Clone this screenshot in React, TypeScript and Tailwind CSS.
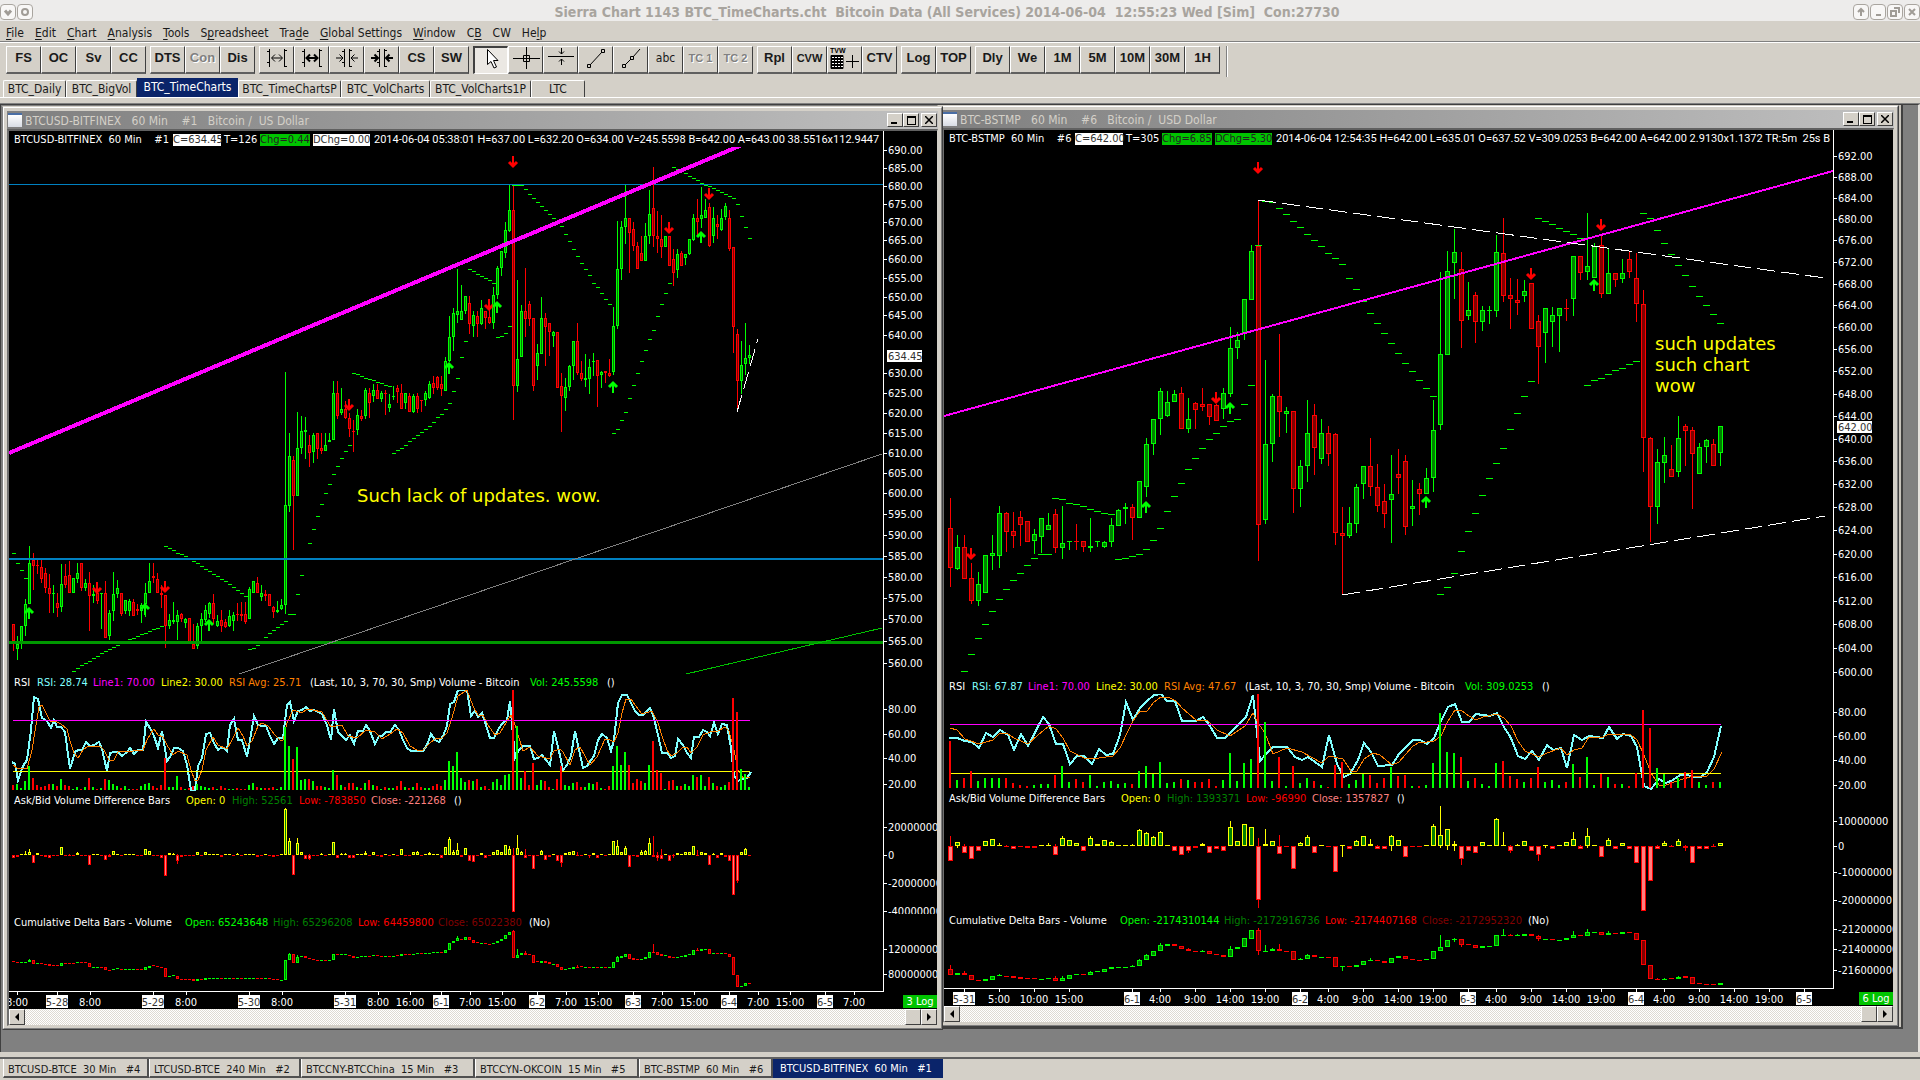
import type { ReactNode } from "react";

const GREEN = "#00ff00";
const RED = "#ff0000";
const UI = "font-['DejaVu_Sans_Condensed','DejaVu_Sans',sans-serif]";

type Scale = (v: number) => number;
type Bar = { color: string; fill: string; high: number; top: number; bottom: number; low: number };
type Series = { x0: number; step: number; half: number };

// Price panes are recorded at 2.8 units per pixel, study panes at 3.
const priceY: Scale = (v) => Math.round(130 + v / 2.8);
const studyY: Scale = (v) => Math.round(670 + (v - 1) / 3);

const words = (s: string) => s.trim().split(/\s+/);

// "color high top bottom low" for every bar
function parsePrice(s: string): Bar[] {
  return s.split(/[;\n]/).filter((r) => r.trim()).map((row) => {
    const [c, ...n] = words(row);
    const [high, top, bottom, low] = n.map((v) => priceY(Number(v)));
    return c === "g"
      ? { color: GREEN, fill: "#008000", high, top, bottom, low }
      : { color: RED, fill: "#800000", high, top, bottom, low };
  });
}

// "delta[:wick up[:wick down]]" around the zero line
function parseDiff(s: string, zero: number): Bar[] {
  return words(s).map((w) => {
    const [d, up = 0, down = 0] = w.split(":").map(Number);
    const t = zero - Math.max(d, 0);
    const b = zero - Math.min(d, 0);
    return {
      color: d > 0 ? "#ffff00" : RED,
      fill: d > 0 ? "#008000" : "#ff7f7f",
      high: studyY(Math.min(t, zero - up)),
      top: studyY(t),
      bottom: studyY(b),
      low: studyY(Math.max(b, zero + down)),
    };
  });
}

// "top,bottom[,high[,low]]"; the colour follows the sign of the difference bar
function parseDelta(s: string, diff: Bar[]): Bar[] {
  return words(s).map((w, i) => {
    const [t, b, h = t, l = b] = w.split(",").map(Number);
    const down = diff[i]?.color === RED;
    return {
      color: down ? RED : GREEN,
      fill: down ? "#800000" : "#008000",
      high: studyY(h),
      top: studyY(t),
      bottom: studyY(b),
      low: studyY(l),
    };
  });
}

function points(s: string, x0: number) {
  return words(s)
    .map((p) => {
      const [x, y] = p.split(",").map(Number);
      return `${Math.round(x0 + x / 3)},${studyY(y)}`;
    })
    .join(" ");
}

/* ---------- BITFINEX data ---------- */

const leftSeries: Series = { x0: 13, step: 4, half: 1 };

const leftPrice = parsePrice(`
r 1383 1383 1430 1460;g 1418 1438 1452 1483;g 1390 1390 1440 1452;g 1312 1327 1390 1418;g 1165 1212 1328 1328
r 1185 1205 1220 1288;r 1205 1218 1222 1242;r 1205 1224 1256 1268;r 1225 1240 1283 1297;r 1243 1283 1300 1352
g 1275 1296 1300 1353;r 1297 1324 1337 1363;g 1215 1272 1335 1350;r 1216 1250 1275 1283;r 1207 1247 1297 1297
g 1255 1255 1296 1296;g 1212 1241 1257 1268;r 1212 1212 1283 1290;g 1257 1267 1283 1290;r 1238 1267 1304 1402
g 1275 1298 1304 1325;r 1297 1297 1320 1327;g 1295 1297 1300 1397;r 1263 1297 1423 1423;g 1345 1352 1416 1428
g 1238 1300 1346 1375;g 1260 1283 1300 1310;r 1297 1297 1356 1360;g 1316 1316 1347 1356;g 1312 1320 1347 1360
r 1312 1322 1360 1360;r 1328 1342 1347 1358;g 1325 1330 1347 1380;g 1268 1297 1328 1363;g 1212 1264 1297 1297
r 1212 1248 1255 1268;r 1240 1256 1297 1297;r 1275 1297 1303 1337;r 1302 1302 1390 1450;g 1356 1372 1390 1398
g 1322 1371 1378 1383;g 1343 1357 1377 1428;r 1352 1356 1369 1378;g 1367 1370 1380 1393;r 1367 1367 1438 1440
r 1382 1440 1452 1452;g 1380 1390 1444 1453;g 1352 1369 1390 1433;g 1330 1345 1371 1378;g 1322 1325 1356 1366
r 1298 1325 1368 1383;g 1358 1375 1390 1392;r 1343 1372 1390 1405;r 1370 1378 1392 1393;g 1345 1360 1390 1392
g 1350 1358 1375 1402;r 1323 1356 1358 1375;r 1322 1354 1360 1375;r 1322 1354 1377 1383;g 1280 1286 1370 1370
g 1262 1264 1296 1296;r 1252 1267 1296 1296;g 1273 1296 1308 1320;r 1287 1298 1306 1318;r 1300 1300 1333 1333
r 1333 1335 1350 1365;g 1320 1343 1350 1353;g 1312 1330 1342 1343;g 678 1050 1330 1354;g 847 913 1052 1070
r 914 924 1026 1175;g 790 891 1026 1026;g 802 844 891 908;g 804 841 845 920;r 855 882 903 944
g 848 855 902 932;r 847 847 892 920;r 847 890 898 907;g 847 883 898 898;g 847 868 874 874
g 703 735 867 867;r 703 735 802 810;g 722 780 793 798;r 760 782 807 808;r 791 805 836 860
r 812 843 846 901;g 782 799 841 853;r 783 800 810 814;g 722 729 802 810;r 722 735 765 805
g 710 729 746 762;r 712 729 754 754;g 730 735 754 762;r 728 736 740 797;g 740 767 777 790
g 718 745 748 757;r 715 722 734 765;r 711 735 780 780;g 735 735 765 782;r 737 745 790 790
g 740 746 790 792;r 735 745 780 793;r 755 757 759 790;g 732 735 757 773;g 703 710 750 752
r 690 709 722 740;r 690 692 722 727;r 688 712 724 744;g 636 648 730 730;g 521 580 646 650
g 497 511 580 618;g 389 508 517 540;g 434 508 533 533;g 465 466 508 514;r 465 485 544 570
g 507 519 550 580;r 507 520 544 580;g 476 497 544 545;r 507 508 525 556;r 490 524 540 543
g 440 463 540 556;g 380 386 463 472;g 340 340 385 410;g 257 280 343 357;g 155 225 282 286
r 158 225 718 811;g 420 642 718 733;g 490 508 636 636;r 386 508 528 580;r 479 487 528 548
r 527 527 718 730;g 600 625 660 700;g 468 527 626 626;r 513 527 551 660;r 540 541 565 632
g 562 566 578 607;r 566 566 723 723;r 680 718 746 845;g 695 720 751 786;g 658 660 720 732
g 591 591 660 700;r 540 591 679 687;r 647 679 698 702;g 627 695 699 720;g 642 664 696 738
g 624 646 650 690;r 645 645 688 775;g 676 677 685 721;r 675 676 681 708;r 642 681 688 692
g 496 550 677 687;g 255 390 548 556;g 255 272 390 420;g 155 245 272 320;r 245 245 287 400
r 257 278 325 338;r 313 325 390 390;r 298 345 368 368;g 260 298 368 368;g 168 236 298 318
r 104 219 298 327;r 228 298 306 343;r 237 306 328 357;g 298 298 328 328;r 298 298 380 380
r 333 360 399 438;g 333 347 393 413;r 340 345 382 382;g 347 348 359 377;g 305 306 348 350
g 236 247 308 310;r 193 247 257 293;g 160 237 250 273;g 193 225 245 245;r 205 216 324 327
g 216 245 298 316;r 237 262 272 305;g 222 245 280 283;g 205 213 244 252;r 224 247 332 340
r 328 328 551 624;r 557 572 702 783;g 590 659 702 738;g 540 637 654 685;g 602 630 637 655`);

const leftSar: [number, string][] = [
  [0, "1185 1211 1233 1255"],
  [14, "1522 1514 1505 1499 1493 1486 1479 1472 1465 1460 1454 1448 1443 1437 1431 1426 1421 1416 1411 1407 1403 1397 1393 1388"],
  [38, "1166 1171 1177 1183 1188 1194 1200 1206 1213 1221 1229 1235 1242 1249 1257 1264 1271 1280 1287 1296 1305"],
  [59, "1454 1450 1443 1433 1420 1409 1400 1391 1384 1376 1356 1356 1300 1247 1200 1157 1118 1082 1048 1017 992 964 942 919 900 883"],
  [85, "679 684 688 693 697 701 705 709 713 716"],
  [95, "903 897 890 881 870 861 853 846 838 828 818 804 794 782 765 732 693 636 592"],
  [114, "390 394 402 409 415 421 429"],
  [121, "580 578 569 550"],
  [125, "155 155 155 166 178 190 202 214 225 236 247 258 270 292 312 334 354 373 390 407 427 440 457 472 488"],
  [150, "847 838 813 790 751 715 679 648 617 586 561 522 488 457 427"],
  [165, "104 109 115 121 128 134 141 147 153 158 162 168 173 179 184 191 208 242 272 303"],
];

const leftRsi = [
  points(
    `37,278 46,282 55,330 68,290 80,272 92,180 103,82 115,88 127,145 140,155 152,175 162,152 172,172 184,172
    196,188 211,298 224,248 235,240 247,240 259,218 271,228 283,226 296,218 307,238 320,305 331,250 343,246
    355,246 367,258 380,248 391,236 403,252 415,240 428,240 438,158 451,175 463,200 475,234 487,183 500,275
    511,262 523,235 535,235 548,245 560,285 573,360 585,362 595,290 607,265 619,192 631,190 643,220 655,240
    665,233 680,243 690,165 703,148 715,212 727,212 740,262 750,212 763,138 775,165 787,168 799,170 811,200
    823,222 835,205 849,205 860,105 871,97 883,155 895,125 907,122 919,112 931,124 943,120 955,128 967,132
    980,165 992,210 1003,118 1015,188 1027,200 1039,210 1051,197 1063,222 1075,183 1088,183 1099,165
    1111,185 1124,222 1136,200 1147,200 1159,188 1171,187 1184,167 1196,180 1208,212 1220,235 1232,243
    1268,243 1280,225 1292,192 1304,212 1316,218 1328,200 1340,170 1350,102 1362,97 1374,62`,
    0,
  ),
  points(
    `21,62 32,140 44,125 55,142 67,130 79,165 91,204 103,204 116,175 128,160 140,152 151,93 165,265 178,240
    188,228 211,228 222,267 235,266 246,255 258,270 271,287 283,183 296,245 308,300 320,285 332,260 344,183
    356,240 369,295 380,288 392,270 403,258 415,210 427,192 440,205 452,245 463,210 475,100 487,75 500,75
    512,100 524,125 536,135 548,135 560,125 571,115 583,145 595,195 606,250 620,250 634,265 644,258 655,208
    668,225 680,250 692,265 702,201 716,201 728,180 740,188 750,198 763,160 775,192 786,163 800,165 812,235
    823,318 835,333 848,328 860,325 872,308`,
    460,
  ),
].join(" ");

const leftAvg = [
  points(
    `40,285 52,295 82,298 95,240 108,165 118,112 127,107 140,135 150,155 170,157 182,163 200,178 211,215
    222,250 235,265 250,242 265,228 300,228 312,240 328,270 343,270 355,248 375,245 400,245 428,240 440,210
    452,190 462,178 475,195 488,202 500,225 520,255 535,243 560,255 573,300 585,335 595,330 607,300 619,240
    640,203 655,225 680,237 695,210 715,175 730,200 740,230 755,215 775,170 787,160 805,170 825,195 840,212
    850,212 862,160 880,122 907,130 920,118 940,120 967,128 992,172 1027,167 1045,200 1070,205 1099,182
    1124,188 1147,208 1171,192 1190,178 1208,190 1230,228 1250,240 1270,240 1290,220 1305,208 1325,205
    1340,190 1355,145 1375,80`,
    0,
  ),
  points(
    `21,62 40,110 55,135 70,135 85,165 105,195 120,190 140,155 152,137 165,165 188,245 210,232 235,258
    270,268 283,245 300,238 310,248 330,285 345,240 360,232 375,260 390,285 410,262 435,208 450,212 463,218
    475,190 487,130 498,88 512,88 524,105 545,132 575,125 595,160 606,200 620,240 634,258 650,250 665,235
    680,232 692,250 710,232 728,195 750,188 775,185 795,172 808,185 823,240 835,300 848,325 870,322`,
    460,
  ),
].join(" ");

const leftVolume = words(`
345 343 354 334 289 325 345 351 348 344 342 350 327 347 348 357 351 358 352 325
352 358 355 327 330 342 348 354 350 357 357 359 350 343 340 348 354 346 265 351
351 319 352 358 355 348 342 350 351 354 351 357 348 354 359 357 354 357 358 346
340 351 355 354 354 351 357 352 172 229 267 231 330 327 327 333 348 348 351 354
300 315 346 352 339 340 352 354 340 330 346 348 357 352 354 354 348 334 352 354
351 340 352 354 354 348 343 348 330 274 289 247 324 336 330 333 328 351 348 357
336 327 346 315 312 57 168 324 303 346 280 346 330 333 351 358 327 290 346 348
339 337 351 352 339 342 336 354 358 348 289 229 286 246 286 340 327 333 339 286
213 300 309 358 333 330 348 349 343 348 316 322 316 349 321 339 348 351 346 336
84 126 297 312 351`).map(Number);

const leftDiff = parseDiff(
  `
-8 -5 3 4:12 10:18 -24 6 -3 -5 -9
-4 -3 24 -3 -2:4 -3 5:8 -2 -3 -30
2 2 -3 -15 -6:2 12 4 -4 4 2
2:4 -3 -3 19 12 -3 -2 -8 -62 6
3:6 -18:2:28 -6 -3 -3 -3 10 -3 10 3
3 3 -6 3 3 -2 4:6 -2 2 2
2 -5 -3 3 -3 -5 -3 2 138:142 42:50
-60 36:52 9 -12 -12:4:16 -3 -4 4:6 -2 4
40 -8 4:6 4:6 -9 -9 4 3 5:12 -3
9 -3 -6 4 -2 4 -3 19 -4 -3
9 9:12 -3 3 5:8 4 2 -8 24 48:54
9:14 14:36 -5 20 -18 -22 -4 5 -9 -2
9 16 9 30 17:27 -171:22 20:60 9:12 -10:18 -2
-42 -3 12:16 -15 -5 3 -18 -24:0:37 6 9
12 -2:10 -3 3 -2:0:8 6 -9 4 -2 4
42 28:45 10 21:28 -36 -2 -5 10:15 12:15 36:52
-6:58 -10:10:18 -12:18 3 -18 -2:2:9 5 4 9 10
28 -2:16 10 5 -30 4:6 -10 6 -5 -18
-121 -78:0:84 10 18:22 -2`,
  556,
);

const leftDelta = parseDelta(
  `
875,878 878,880 878,880 876,878 870,878,867 872,884 880,882 880,883 882,885 884,889
887,890 887,890 880,889 879,881 879,881 879,881 878,881 876,878 877,881 880,892
891,893 891,893 892,894 893,901 900,904 898,901 895,898 897,902 898,901 897,900
897,900 898,901 898,901 893,901 889,896 887,889 888,891 891,895 895,923 918,922
917,920 919,928 927,930 927,930 929,931 929,934 928,935 929,931 924,930 925,927
925,927 924,926 924,929 926,929 926,928 925,928 924,928 925,928 924,926 925,927
924,926 925,928 925,927 925,927 926,928 928,930 928,932 930,932 870,932 852,870,849
852,881 861,880,855 858,863 859,866 864,869 867,871 870,872 870,873 870,872 870,872
852,872 852,856 854,857 854,857 855,859 858,865 862,865 860,863 858,861 858,861
855,860 856,859 858,860 858,860 858,860 858,860 857,860 852,860 853,856 854,857
852,857 850,854 850,854 850,854 849,853 847,851 846,849 846,851 840,851 820,841
813,820 806,814,799 807,810 801,811 801,811 811,820 818,820 819,821 820,823 822,824
819,824 813,820 807,813 796,808 786,797 785,866,778 855,866,838 851,856 850,856,843 853,856
856,879 875,878 873,879 874,880 878,884 883,885 883,892 892,902 897,902 896,899
893,897 891,894,885 890,893 891,893 891,894 891,893 891,895 893,896 893,896 893,896
877,896 863,878,858 860,865 852,863 852,869 866,870 868,872 867,872 863,868 846,864
846,850,822 848,855 852,858 856,860 858,864 862,866 861,864 860,863 856,861 852,857
840,855 840,844,835 838,843 837,839 838,853 849,854 851,854 851,854 851,854 852,863
862,916 916,952 948,952 940,949 939,942`,
  leftDiff,
);

/* ---------- BSTMP data ---------- */

const rightSeries: Series = { x0: 950, step: 7, half: 2 };

const rightPrice = parsePrice(`
r 1030 1115 1225 1280;g 1133 1168 1228 1232;r 1133 1168 1256 1256;r 1212 1255 1320 1327;g 1238 1272 1318 1332
g 1190 1190 1296 1296;g 1133 1183 1192 1232;g 1053 1073 1194 1226;r 1070 1073 1125 1182;r 1070 1124 1137 1170
r 1066 1084 1105 1165;r 1096 1096 1153 1153;g 1118 1132 1152 1188;g 1087 1087 1139 1184;g 1072 1106 1119 1120
r 1061 1076 1169 1184;g 1053 1157 1169 1200;g 1151 1151 1154 1176;r 1103 1151 1154 1176;r 1151 1152 1168 1182
g 1086 1165 1169 1182;g 1151 1151 1154 1168;g 1151 1153 1168 1169;g 1086 1107 1153 1168;g 1062 1063 1108 1108
g 1044 1056 1062 1103;r 1048 1056 1085 1148;g 984 984 1085 1085;g 863 880 999 1028;g 810 810 880 910
g 722 731 810 854;g 731 762 802 803;g 728 738 762 762;r 720 737 838 838;g 750 810 836 848
r 762 763 783 837;r 722 768 775 786;r 768 768 804 825;r 768 770 814 814;g 722 737 782 810
g 552 611 738 747;g 566 588 611 640;g 474 474 570 587;g 322 340 475 475;r 197 324 1105 1207
g 645 880 1091 1103;g 740 746 880 930;r 571 745 789 860;g 776 788 795 848;r 788 788 1006 1072
g 924 942 1006 1056;g 757 849 942 986;r 768 798 891 966;g 810 849 922 935;r 829 849 906 940
r 849 852 1127 1162;r 1056 1127 1137 1299;g 1056 1101 1136 1141;g 991 1000 1102 1128;g 942 942 992 1033
r 863 942 999 1025;r 936 1000 1052 1070;r 991 1040 1074 1114;g 911 1020 1035 1156;r 894 964 973 1018
r 910 928 1111 1134;g 980 1054 1060 1109;r 989 1005 1018 1078;g 945 973 1018 1020;g 757 841 973 1014
g 398 628 825 839;g 339 396 629 629;g 277 342 372 473;r 342 390 534 610;g 426 504 520 532
r 454 462 537 596;g 493 504 537 562;g 492 504 507 543;g 293 342 506 523;r 246 345 464 481
r 413 462 474 557;r 417 477 483 518;g 420 452 464 482;r 429 429 556 556;r 518 536 608 711
g 497 497 567 653;g 496 518 538 608;g 497 498 520 622;r 473 498 502 535;g 353 353 474 521
r 353 354 399 420;g 232 382 398 420;g 316 325 413 413;r 297 323 458 469;g 333 399 458 458
r 399 399 419 440;g 361 399 418 428;r 340 362 397 413;r 344 415 488 538;r 448 488 861 958
r 860 863 1055 1154;g 894 930 1055 1103;g 860 911 931 988;r 881 950 972 972;g 801 863 958 971
r 823 830 842 941;r 832 841 906 1061;g 876 888 962 962;g 865 869 888 932;r 865 880 940 940
g 829 830 903 941`);

const rightSar: [number, string][] = [
  [2, "1516 1468 1423 1384 1348 1314 1286 1261 1239 1217 1199 1188 1188"],
  [15, "1031 1034 1043 1048 1054 1060 1066 1071 1076"],
  [24, "1202 1199 1194 1188 1174 1149 1115 1068 1026 989 950 919 891 866 847 830 816 810 768 715 323"],
  [45, "199 201 219 236 256 272 292 309 326 343 359 376 413 446 479 511 541 569 597 625 651 676 701 723 746"],
  [70, "1300 1280 1241 1180 1124 1071 1023 975 933 891 838 791 746 704"],
  [84, "247 256 264 275 284 292 301"],
  [91, "713 701 693 682 673 665 656 648"],
  [99, "233 247 281 315 348 379 407 438 466 491 516 541"],
];

const rightRsi = [
  points(
    `28,204 50,204 75,213 97,216 118,236 138,190 160,201 181,182 203,196 223,240 244,194 265,228 308,142
    328,162 348,223 370,224 391,282 412,258 433,258 455,284 476,238 498,255 520,254 540,195 558,97 580,152
    600,115 622,95 643,75 664,74 680,93 706,93 726,153 768,153 790,141 810,168 832,204 856,204 897,162
    917,143 938,75 960,275 980,250 1000,233 1042,233 1064,262 1085,270 1105,262 1126,278 1147,293 1168,195
    1190,282 1213,323 1230,312 1255,272 1273,220 1294,248 1315,288 1355,285 1378,252 1420,211`,
    940,
  ),
  points(
    `0,211 22,223 42,205 62,155 83,113 104,103 127,158 148,158 169,134 211,138 232,130 253,172 274,205
    295,260 316,267 337,245 358,270 380,227 400,240 422,236 442,295 462,196 486,210 506,200 548,204 568,172
    590,207 610,193 632,199 652,232 673,348 694,357 716,328 737,340 760,332 780,317 800,315 822,323
    842,323 862,308 883,262 903,168`,
    1420,
  ),
].join(" ");

const rightAvg = [
  points(
    `30,175 50,180 75,207 118,222 160,212 181,190 203,192 223,205 265,222 295,195 328,168 348,178 370,205
    391,245 433,265 455,268 520,258 540,235 560,190 580,155 600,125 622,124 643,98 664,82 690,84 708,95
    726,115 768,152 800,150 832,182 870,200 915,170 938,130 955,160 975,190 1000,252 1042,234 1085,248
    1147,280 1168,258 1210,268 1232,305 1250,305 1273,268 1300,250 1320,255 1355,285 1378,278 1420,230`,
    940,
  ),
  points(
    `0,217 20,217 42,215 62,200 83,155 106,121 127,125 148,138 169,152 190,142 232,134 253,145 274,170
    295,215 316,245 358,262 380,250 422,235 442,256 462,242 486,235 506,203 548,203 568,194 610,193 632,197
    652,210 673,255 694,310 716,347 737,345 780,330 820,320 862,318 883,298 905,247`,
    1420,
  ),
].join(" ");

const rightVolume = words(`
213 331 325 304 334 325 325 325 325 340 346 348 346 343 343 316 289 337 328 337
316 348 337 334 343 340 343 304 289 313 277 340 337 328 331 337 337 328 348 331
250 334 280 267 69 157 334 262 348 289 340 325 334 346 351 286 277 343 331 313
316 340 325 292 319 316 348 348 346 279 130 247 250 262 334 325 343 348 280 274
319 328 337 325 292 337 331 346 337 283 322 262 346 313 322 343 343 348 310 120
175 295 313 337 325 307 301 337 346 337 337`).map(Number);

const rightDiff = parseDiff(
  `
-46:30 12:12:6 -20:6 -38 -14 14 20:22 2:8 -3:4 -10
-3 -6 -6 2 4:8 -26:6 24:30 18 9 -14
24:30 6 18 12:14 4 2 3:5 48:52 38:42 26:30
42:46 4 -14 -28 -16:0:22 -6 6:10 -22 -10 -16
57:75 14 66 57 -163:25:185 5:50 14 -23:34 -3 -68
9:12 27:34 -20 3 -3 -79 2:4:32 -10 14:18 30
5:22 -10:4 -10 30:34:14 18 -32 -3 -3 3 60:67
32:120:5 51:51:12 5:14:14 -38:0:58 -14 -20 12 2:4 81:85 3:42
-16:4:20 2:6 15 -16 -28:0:46 3:4:5 -10 2:4 12 20:42
-10:4 29:54:5 2 -32 18:24 -10 9 -8 -52 -196
-106 -10:4 9:15 -4:4 15:20 -6:4:14 -52 -8 -8 -4:5 9`,
  529,
);

const rightDelta = parseDelta(
  `
897,916,885 909,917 909,917,905 916,932 930,934 929,935 918,930 917,920,913 918,920 919,926
923,927 924,927 925,929 927,929 924,928 924,935,920 924,935,920 915,928 912,917 912,917
907,916,903 904,908 898,906 892,899 891,893 891,893 889,893,886 870,890,867 856,872,852 844,858
825,844,821 823,828 823,830 828,838 838,845,836 844,848 844,848,840 844,854 852,857 855,863
837,863,830 832,838 805,833 781,807 781,845,770,855 843,845,825 838,845,834 838,845,822 843,845 844,871
868,872,864 855,868,852 855,863 862,864 862,864 862,893 889,892,889,903 889,893 886,893 874,887
871,875,864 870,875 874,880 865,880 858,865 858,868 868,871 870,873 868,872 844,868
832,845,795 811,833 808,812,804,816 808,825,808,831 823,826 826,836 828,836 828,830 796,830 795,798,777
795,800,792 797,800,794 793,800 793,800 798,808,796,815 807,809 808,812 810,812 804,811 796,806,785
796,800 786,800,777 786,789 787,797 789,797,785 790,794 787,793 787,791 790,812 811,887
886,929 928,932,924 927,932,924 926,929 921,929,918 920,924,918 922,944 941,944 942,946 944,946 940,947`,
  rightDiff,
);

/* ---------- drawing ---------- */

function Bars({ data, x0, step, half }: Series & { data: Bar[] }) {
  return (
    <>
      {data.map((b, i) => {
        const x = x0 + i * step;
        const h = Math.max(1, b.bottom - b.top);
        return (
          <g key={i}>
            <rect x={x} y={b.high} width={1} height={Math.max(1, b.low - b.high)} fill={b.color} />
            <rect x={x - half} y={b.top} width={half * 2 + 1} height={h} fill={b.color} />
            {h > 2 && <rect x={x - half + 1} y={b.top + 1} width={half * 2 - 1} height={h - 2} fill={b.fill} />}
          </g>
        );
      })}
    </>
  );
}

function Sar({ runs, x0, step }: { runs: [number, string][]; x0: number; step: number }) {
  const back = step === 4 ? 1 : 3;
  return (
    <>
      {runs.map(([start, ys]) =>
        words(ys).map((y, i) => (
          <rect key={`${start}-${i}`} x={x0 + (start + i) * step - back} y={priceY(Number(y))} width={step} height={1} fill={GREEN} />
        )),
      )}
    </>
  );
}

function Volume({ tops, base, bars, x0, step }: { tops: number[]; base: number; bars: Bar[]; x0: number; step: number }) {
  return (
    <>
      {tops.map((t, i) => (
        <rect key={i} x={x0 - 1 + i * step} y={studyY(t)} width={2} height={studyY(base) - studyY(t)} fill={bars[i].color} />
      ))}
    </>
  );
}

// x, y is the arrow's tip
function Arrow({ x, y, up }: { x: number; y: number; up?: boolean }) {
  const d = up ? 1 : -1;
  return (
    <g fill="none" stroke={up ? GREEN : RED} shapeRendering="auto">
      <path d={`M${x} ${y + d * 12}V${y + d * 2}`} strokeWidth={2} />
      <path d={`M${x - 4} ${y + d * 6}L${x} ${y + d * 2}L${x + 4} ${y + d * 6}`} strokeWidth={3} />
    </g>
  );
}

type Tick = { y: number; label?: string; boxed?: boolean };

const ticks = (scale: Scale, s: string): Tick[] =>
  words(s).map((w) => {
    const [label, y] = w.split("@");
    return { label, y: scale(Number(y)) };
  });

type Seg = [text: string, className: string];
type PaneProps = {
  height: string;
  axisWidth: string;
  x0: number;
  y0: number;
  name: string;
  header: ReactNode;
  ticks: Tick[];
  children: ReactNode;
};

function Pane({ height, axisWidth, x0, y0, name, header, ticks, children }: PaneProps) {
  return (
    <section className={`flex ${height}`} aria-label={name}>
      <div className="flex min-w-0 flex-1 flex-col">
        <div className="flex h-4 shrink-0 items-center overflow-hidden pt-[2px] pl-[5px] text-[11px] leading-[14px] whitespace-pre text-white">{header}</div>
        <svg className="min-h-0 w-full flex-1 overflow-hidden" shapeRendering="crispEdges">
          <g transform={`translate(${-x0} ${-y0 - 16})`}>{children}</g>
        </svg>
      </div>
      <svg className={`h-full shrink-0 overflow-hidden border-l border-white ${axisWidth}`} shapeRendering="crispEdges">
        <g transform={`translate(0 ${-y0})`} fontSize={11} fill="#fff">
          {ticks.map((t, i) => (
            <g key={i}>
              {!t.boxed && <rect x={0} y={t.y} width={3} height={1} />}
              {t.boxed && <rect x={3} y={t.y - 6} width={35} height={12} />}
              <text x={4} y={t.y + 4} fill={t.boxed ? "#333" : "#fff"}>
                {t.label}
              </text>
            </g>
          ))}
        </g>
      </svg>
    </section>
  );
}

function Segments({ items }: { items: Seg[] }) {
  return (
    <>
      {items.map(([text, cls]) => (
        <span key={text} className={`shrink-0 ${cls}`}>
          {text}
        </span>
      ))}
    </>
  );
}

type TimeLabel = [x: number, text: string];

function TimeAxis({ x0, labels, log }: { x0: number; labels: TimeLabel[]; log: string }) {
  return (
    <div className="flex h-[18px]">
      <svg className="h-full min-w-0 flex-1 overflow-hidden" shapeRendering="crispEdges">
        <rect x={0} y={0} width={x0 === 9 ? 875 : 890} height={1} fill="#fff" />
        <g transform={`translate(${-x0} 0)`} fontSize={11} textAnchor="middle">
          {labels.map(([x, text]) => {
            const day = text.includes("-");
            const w = text.length > 3 ? 22 : 16;
            return (
              <g key={x}>
                <rect x={x} y={0} width={1} height={4} fill="#fff" />
                {day && <rect x={x - w / 2} y={4} width={w} height={13} fill="#fff" />}
                <text x={x} y={15} fill={day ? "#333" : "#fff"}>
                  {text}
                </text>
              </g>
            );
          })}
        </g>
      </svg>
      <span className="mt-1 h-[13px] w-[34px] shrink-0 bg-[#00c400] text-center text-[11px] leading-[14px] text-white">{log}</span>
    </div>
  );
}

const raised = "border border-t-white border-l-white border-r-[#404040] border-b-[#404040] bg-[#d4d0c8]";

function ScrollBar() {
  return (
    <div className="flex h-4 justify-between bg-[repeating-conic-gradient(#ffffff_0_25%,#dedad2_0_50%)] bg-[length:2px_2px]">
      <button aria-label="Scroll left" className={`flex h-4 w-4 items-center justify-center ${raised}`}>
        <svg width="4" height="8"><path d="M4 0v8L0 4z" /></svg>
      </button>
      <div className="flex">
        <div className={`h-4 w-4 ${raised}`} />
        <button aria-label="Scroll right" className={`flex h-4 w-4 items-center justify-center ${raised}`}>
          <svg width="4" height="8"><path d="M0 0v8l4-4z" /></svg>
        </button>
      </div>
    </div>
  );
}

function ChartWindow({ place, title, children }: { place: string; title: string; children: ReactNode }) {
  return (
    <article className={`absolute border border-t-[#d4d0c8] border-r-[#404040] border-b-[#404040] border-l-[#808080] ${place}`}>
      <div className="border border-t-white border-r-[#808080] border-b-[#808080] border-l-white bg-[#d4d0c8] px-[3px] pt-[3px] pb-[2px]">
        <header className="flex h-[18px] items-center bg-linear-to-r from-[#808080] to-[#c0c0c0] pl-px">
          <span className="h-[14px] w-[14px] border-t-2 border-t-[#4a6ea5] bg-linear-to-b from-white to-[#d8dce4]" />
          <h2 className="flex-1 pt-[2px] pl-[3px] text-[12px] leading-4 whitespace-pre text-[#d4d0c8]">{title}</h2>
          <button aria-label="Minimize" className={`flex h-[14px] w-4 items-end pb-[2px] pl-[3px] ${raised}`}>
            <span className="h-[2px] w-[6px] bg-black" />
          </button>
          <button aria-label="Maximize" className={`mr-[2px] flex h-[14px] w-4 items-center justify-center ${raised}`}>
            <span className="h-[9px] w-[9px] border border-t-2 border-black" />
          </button>
          <button aria-label="Close" className={`mr-px flex h-[14px] w-4 items-center justify-center ${raised}`}>
            <svg width="8" height="8" stroke="#000" strokeWidth="1.5"><path d="M0 0l8 8M8 0L0 8" /></svg>
          </button>
        </header>
        <div className="border-t-2 border-r border-b border-l-2 border-t-[#606060] border-r-[#d4d0c8] border-b-[#d4d0c8] border-l-[#707070] bg-black">
          {children}
        </div>
      </div>
    </article>
  );
}

const times = (s: string): TimeLabel[] =>
  words(s).map((w) => {
    const [x, text] = w.split("=");
    return [Number(x), text];
  });

const quote = "text-[11px] font-['Roboto',sans-serif]";

function BitfinexChart() {
  const common = { x0: 9, axisWidth: "w-[54px]" };
  return (
    <ChartWindow place="top-px left-px z-10 w-[941px]" title="BTCUSD-BITFINEX   60 Min    #1   Bitcoin /  US Dollar">
      <Pane
        {...common}
        height="h-[543px]"
        y0={131}
        name="BTCUSD-BITFINEX price"
        header={
          <Segments
            items={[
              ["BTCUSD-BITFINEX  60 Min    #1", "w-[159px]"],
              ["C=634.45", "mr-[3px] w-12 bg-white leading-3 text-[#333]"],
              ["T=126", "w-9"],
              ["Chg=0.44", "mr-[3px] w-[50px] bg-[#00c400] leading-3 text-[#222]"],
              ["DChg=0.00", "mr-1 w-[57px] bg-white leading-3 text-[#333]"],
              ["2014-06-04 05:38:01 H=637.00 L=632.20 O=634.00 V=245.5598 B=642.00 A=643.00 38.5516x112.9447", quote],
            ]}
          />
        }
        ticks={[
          ...ticks(
            priceY,
            `690.00@56 685.00@106 680.00@156 675.00@206 670.00@257 665.00@307 660.00@360 655.00@414 650.00@467
            645.00@518 640.00@573 630.00@680 625.00@736 620.00@792 615.00@848 610.00@904 605.00@960 600.00@1016
            595.00@1074 590.00@1133 585.00@1192 580.00@1251 575.00@1310 570.00@1368 565.00@1430 560.00@1492`,
          ),
          { label: "634.45", y: priceY(632), boxed: true },
        ]}
      >
        <rect x={9} y={184} width={874} height={1} fill="#0080c0" />
        <Sar runs={leftSar} {...leftSeries} />
        <Bars data={leftPrice} {...leftSeries} />
        <rect x={9} y={558} width={874} height={2} fill="#0080c0" />
        <rect x={9} y={641} width={874} height={3} fill="#009800" />
        <path d="M239 674L882 454" stroke="#808080" />
        <path d="M686 674L882 628" stroke="#00c000" />
        <path d="M9 453L742 145" stroke="#ff00ff" strokeWidth={4} />
        <path d="M737 412L758 339" stroke="#fff" strokeDasharray="18 6" />
        <Arrow x={97} y={594} />
        <Arrow x={165} y={593} />
        <Arrow x={349} y={411} />
        <Arrow x={489} y={311} />
        <Arrow x={513} y={168} />
        <Arrow x={669} y={234} />
        <Arrow x={709} y={200} />
        <Arrow x={29} y={607} up />
        <Arrow x={145} y={603} up />
        <Arrow x={209} y={619} up />
        <Arrow x={449} y={362} up />
        <Arrow x={497} y={301} up />
        <Arrow x={613} y={381} up />
        <Arrow x={701} y={231} up />
        <text x={357} y={502} fontSize={18} fill="#ffff00" className="font-['DejaVu_Sans',sans-serif]">
          Such lack of updates. wow.
        </text>
      </Pane>
      <Pane
        {...common}
        height="h-[118px]"
        y0={674}
        name="RSI and volume"
        header={
          <Segments
            items={[
              ["RSI", "w-[23px]"],
              ["RSI: 28.74", "w-14 text-[#80ffff]"],
              ["Line1: 70.00", "w-[68px] text-[#ff00ff]"],
              ["Line2: 30.00", "w-[68px] text-[#ffff00]"],
              ["RSI Avg: 25.71", "w-[81px] text-[#ff8000]"],
              ["(Last, 10, 3, 70, 30, Smp)", "w-[129px]"],
              ["Volume - Bitcoin", "w-[91px]"],
              ["Vol: 245.5598", "w-[77px] text-[#00ff00]"],
              ["()", ""],
            ]}
          />
        }
        ticks={ticks(studyY, "80.00@117 60.00@192 40.00@266 20.00@342")}
      >
        <polyline points={leftRsi} fill="none" stroke="#80ffff" strokeWidth={2} />
        <polyline points={leftAvg} fill="none" stroke="#ff8000" />
        <rect x={13} y={720} width={737} height={1} fill="#ff00ff" />
        <rect x={13} y={771} width={737} height={1} fill="#ffff00" />
        <Volume tops={leftVolume} base={362} bars={leftPrice} {...leftSeries} />
      </Pane>
      <Pane
        {...common}
        height="h-[122px]"
        y0={792}
        name="Ask/Bid volume difference"
        header={
          <Segments
            items={[
              ["Ask/Bid Volume Difference Bars", "w-[172px]"],
              ["Open: 0", "w-[46px] text-[#ffff00]"],
              ["High: 52561", "w-[67px] text-[#008000]"],
              ["Low: -783850", "w-[72px] text-[#ff0000]"],
              ["Close: -221268", "w-[83px] text-[#ff8080]"],
              ["()", ""],
            ]}
          />
        }
        ticks={ticks(studyY, "20000000@472 0@557 -20000000@641 -40000000@723")}
      >
        <Bars data={leftDiff} {...leftSeries} />
      </Pane>
      <Pane
        {...common}
        height="h-[77px]"
        y0={914}
        name="Cumulative delta"
        header={
          <Segments
            items={[
              ["Cumulative Delta Bars - Volume", "w-[171px]"],
              ["Open: 65243648", "w-[88px] text-[#00ff00]"],
              ["High: 65296208", "w-[85px] text-[#008000]"],
              ["Low: 64459800", "w-[80px] text-[#ff0000]"],
              ["Close: 65022380", "w-[91px] text-[#800000]"],
              ["(No)", ""],
            ]}
          />
        }
        ticks={ticks(studyY, "120000000@839 80000000@914")}
      >
        <Bars data={leftDelta} {...leftSeries} />
      </Pane>
      <TimeAxis
        x0={9}
        log="3 Log"
        labels={times(`17=8:00 57=5-28 90=8:00 153=5-29 186=8:00 249=5-30 282=8:00 345=5-31 378=8:00 410=16:00
          441=6-1 470=7:00 502=15:00 537=6-2 566=7:00 598=15:00 633=6-3 662=7:00 694=15:00 729=6-4 758=7:00
          790=15:00 825=6-5 854=7:00`)}
      />
      <ScrollBar />
    </ChartWindow>
  );
}

function BstmpChart() {
  const common = { x0: 944, axisWidth: "w-[60px]" };
  return (
    <ChartWindow place="top-0 left-[936px] w-[962px]" title="BTC-BSTMP   60 Min    #6   Bitcoin /  USD Dollar">
      <Pane
        {...common}
        height="h-[548px]"
        y0={130}
        name="BTC-BSTMP price"
        header={
          <Segments
            items={[
              ["BTC-BSTMP  60 Min    #6", "w-[126px]"],
              ["C=642.00", "mr-[3px] w-12 bg-white leading-3 text-[#333]"],
              ["T=305", "w-9"],
              ["Chg=6.85", "mr-[3px] w-[50px] bg-[#00c400] leading-3 text-[#222]"],
              ["DChg=5.30", "mr-1 w-[57px] bg-[#00c400] leading-3 text-[#222]"],
              ["2014-06-04 12:54:35 H=642.00 L=635.01 O=637.52 V=309.0253 B=642.00 A=642.00 2.9130x1.1372 TR:5m  25s B", quote],
            ]}
          />
        }
        ticks={[
          ...ticks(
            priceY,
            `692.00@73 688.00@131 684.00@189 680.00@248 676.00@308 672.00@369 668.00@431 664.00@489 660.00@551
            656.00@613 652.00@674 648.00@739 644.00@800 640.00@864 636.00@926 632.00@990 628.00@1055 624.00@1120
            620.00@1187 616.00@1251 612.00@1318 608.00@1382 604.00@1449 600.00@1517`,
          ),
          { label: "642.00", y: priceY(831), boxed: true },
        ]}
      >
        <Bars data={rightPrice} {...rightSeries} />
        <Sar runs={rightSar} {...rightSeries} />
        <path d="M944 416L1833 171" stroke="#ff00ff" strokeWidth={2} />
        <path d="M1258 200L1825 278" stroke="#fff" strokeDasharray="18 6" />
        <path d="M1342 595L1825 516" stroke="#fff" strokeDasharray="18 6" />
        <Arrow x={971} y={560} />
        <Arrow x={1216} y={404} />
        <Arrow x={1258} y={174} />
        <Arrow x={1531} y={280} />
        <Arrow x={1601} y={231} />
        <Arrow x={1146} y={501} up />
        <Arrow x={1230} y={402} up />
        <Arrow x={1426} y={496} up />
        <Arrow x={1594} y={279} up />
        <g fontSize={18} fill="#ffff00" className="font-['DejaVu_Sans',sans-serif]">
          <text x={1655} y={350}>such updates</text>
          <text x={1655} y={371}>such chart</text>
          <text x={1655} y={392}>wow</text>
        </g>
      </Pane>
      <Pane
        {...common}
        height="h-[112px]"
        y0={678}
        name="RSI and volume"
        header={
          <Segments
            items={[
              ["RSI", "w-[23px]"],
              ["RSI: 67.87", "w-14 text-[#80ffff]"],
              ["Line1: 70.00", "w-[68px] text-[#ff00ff]"],
              ["Line2: 30.00", "w-[68px] text-[#ffff00]"],
              ["RSI Avg: 47.67", "w-[81px] text-[#ff8000]"],
              ["(Last, 10, 3, 70, 30, Smp)", "w-[129px]"],
              ["Volume - Bitcoin", "w-[91px]"],
              ["Vol: 309.0253", "w-[77px] text-[#00ff00]"],
              ["()", ""],
            ]}
          />
        }
        ticks={ticks(studyY, "80.00@128 60.00@200 40.00@272 20.00@347")}
      >
        <polyline points={rightRsi} fill="none" stroke="#80ffff" strokeWidth={2} />
        <polyline points={rightAvg} fill="none" stroke="#ff8000" />
        <rect x={950} y={724} width={771} height={1} fill="#ff00ff" />
        <rect x={950} y={773} width={771} height={1} fill="#ffff00" />
        <Volume tops={rightVolume} base={356} bars={rightPrice} {...rightSeries} />
      </Pane>
      <Pane
        {...common}
        height="h-[122px]"
        y0={790}
        name="Ask/Bid volume difference"
        header={
          <Segments
            items={[
              ["Ask/Bid Volume Difference Bars", "w-[172px]"],
              ["Open: 0", "w-[46px] text-[#ffff00]"],
              ["High: 1393371", "w-[79px] text-[#008000]"],
              ["Low: -96990", "w-[66px] text-[#ff0000]"],
              ["Close: 1357827", "w-[85px] text-[#ff8080]"],
              ["()", ""],
            ]}
          />
        }
        ticks={ticks(studyY, "10000000@453 0@530 -10000000@608 -20000000@690")}
      >
        <Bars data={rightDiff} {...rightSeries} />
      </Pane>
      <Pane
        {...common}
        height="h-[76px]"
        y0={912}
        name="Cumulative delta"
        header={
          <Segments
            items={[
              ["Cumulative Delta Bars - Volume", "w-[171px]"],
              ["Open: -2174310144", "w-[104px] text-[#00ff00]"],
              ["High: -2172916736", "w-[101px] text-[#008000]"],
              ["Low: -2174407168", "w-[97px] text-[#ff0000]"],
              ["Close: -2172952320", "w-[106px] text-[#800000]"],
              ["(No)", ""],
            ]}
          />
        }
        ticks={ticks(studyY, "-2120000000@779 -2140000000@838 -2160000000@902")}
      >
        <Bars data={rightDelta} {...rightSeries} />
      </Pane>
      <TimeAxis
        x0={944}
        log="6 Log"
        labels={times(`964=5-31 999=5:00 1034=10:00 1069=15:00 1132=6-1 1160=4:00 1195=9:00 1230=14:00 1265=19:00
          1300=6-2 1328=4:00 1363=9:00 1398=14:00 1433=19:00 1468=6-3 1496=4:00 1531=9:00 1566=14:00 1601=19:00
          1636=6-4 1664=4:00 1699=9:00 1734=14:00 1769=19:00 1804=6-5`)}
      />
      <ScrollBar />
    </ChartWindow>
  );
}

/* ---------- application frame ---------- */

const menus: [string, string, string][] = [
  ["", "F", "ile"],
  ["", "E", "dit"],
  ["", "C", "hart"],
  ["", "A", "nalysis"],
  ["", "T", "ools"],
  ["S", "p", "readsheet"],
  ["Tra", "d", "e"],
  ["", "G", "lobal Settings"],
  ["", "W", "indow"],
  ["C", "B", ""],
  ["CW", "", ""],
  ["He", "l", "p"],
];

function SpacingIcon({ kind }: { kind: "wide" | "wideBold" | "narrow" | "narrowBold" }) {
  const bold = kind.endsWith("Bold") ? 2 : 1;
  return kind.startsWith("wide") ? (
    <svg width="24" height="24" fill="none" stroke="#000">
      <path d="M4.500 3v18M19.500 3v18M2 5.500h2M20 4.500h2M2 16.500h2M20 20.500h2" />
      <path strokeWidth={bold} d="M7 12h10M10 8.500L6.500 12l3.500 3.500M14 8.500l3.500 3.500-3.500 3.500" />
    </svg>
  ) : (
    <svg width="24" height="24" fill="none" stroke="#000">
      <path d="M9.500 3v18M14.500 3v18M7 5.500h2M15 4.500h2M7 16.500h2M15 20.500h2" />
      <path strokeWidth={bold} d="M1 12h7M4.500 8.500L8 12l-3.500 3.500M23 12h-7M19.500 8.500L16 12l3.500 3.500" />
    </svg>
  );
}

const pointer = (
  <svg width="24" height="24" fill="#fff" stroke="#000"><path d="M8.500 2.500v15l3.500-3 3 6.500 2.500-1-3-6.500h4.500z" /></svg>
);
const crosshair = (
  <svg width="28" height="24" fill="none" stroke="#000"><path d="M14.500 0v23M1 12.500h27M11.500 9.500h6v6h-6z" /></svg>
);
const priceLine = (
  <svg width="28" height="24" fill="none" stroke="#000"><path d="M1 10.500h26M14.500 2v6M12 5.500l2.500 2.500 2.500-2.500M14.500 13v6M12 15.500l2.500-2.500 2.500 2.500" /></svg>
);
const line = (
  <svg width="22" height="24" fill="none" stroke="#000"><path d="M2.500 18.500h3v3h-3zM16.500 3.500h3v3h-3zM5 19L17 6" /></svg>
);
const ray = (
  <svg width="22" height="24" fill="none" stroke="#000"><path d="M2.500 18.500h3v3h-3zM10.500 10.500h3v3h-3zM5 19l6-6M13 11l7-8" /></svg>
);
const tradeWindow = (
  <svg width="30" height="26" stroke="#000">
    <text x="0" y="8" fontSize="7" stroke="none" className="font-['Liberation_Sans',sans-serif] font-bold">TVW</text>
    <path d="M1 10.500h12v13h-12z" />
    <path stroke="#fff" strokeDasharray="2 1" d="M2 12.500h11M2 15.500h11M2 18.500h11M2 21.500h11" />
    <path d="M16 16.500h13M22.500 10v13" />
  </svg>
);

type Tool = { label: string; icon?: ReactNode; cls?: string };

const toolGroups: Tool[][] = [
  [{ label: "FS" }, { label: "OC" }, { label: "Sv" }, { label: "CC" }],
  [{ label: "DTS" }, { label: "Con", cls: "text-[13px] font-bold text-[#808080] [text-shadow:1px_1px_#fff]" }, { label: "Dis" }],
  [
    { label: "Widen bars", icon: <SpacingIcon kind="wide" /> },
    { label: "Widen spacing", icon: <SpacingIcon kind="wideBold" /> },
    { label: "Narrow bars", icon: <SpacingIcon kind="narrow" /> },
    { label: "Narrow spacing", icon: <SpacingIcon kind="narrowBold" /> },
    { label: "CS" },
    { label: "SW" },
  ],
  [
    { label: "Pointer", icon: pointer },
    { label: "Crosshair", icon: crosshair },
    { label: "Price line", icon: priceLine },
    { label: "Line", icon: line },
    { label: "Ray", icon: ray },
    { label: "abc", cls: "text-[12px]" },
    { label: "TC 1", cls: "text-[11px] font-bold text-[#808080] [text-shadow:1px_1px_#fff]" },
    { label: "TC 2", cls: "text-[11px] font-bold text-[#808080] [text-shadow:1px_1px_#fff]" },
  ],
  [{ label: "Rpl" }, { label: "CVW", cls: "text-[11px] font-bold" }, { label: "TVW", icon: tradeWindow }, { label: "CTV" }],
  [{ label: "Log" }, { label: "TOP" }],
  [{ label: "Dly" }, { label: "We" }, { label: "1M" }, { label: "5M" }, { label: "10M" }, { label: "30M" }, { label: "1H" }],
];

function Toolbar() {
  return (
    <div className="flex h-[35px] items-start gap-1 pt-[3px] pl-[6px]" role="toolbar" aria-label="Tools">
      {toolGroups.map((group, i) => (
        <div key={i} className="flex">
          {group.map((t) => {
            const pressed = t.label === "Pointer";
            return (
              <button
                key={t.label}
                aria-label={t.label}
                aria-pressed={pressed || undefined}
                className={`flex h-7 w-[35px] items-center justify-center overflow-hidden border pb-[3px] ${
                  t.label === "abc" ? "" : "font-['Liberation_Sans',sans-serif]"
                } ${
                  pressed
                    ? "border-t-2 border-t-[#404040] border-r-white border-b-white border-l-2 border-l-[#404040] bg-[#ebe8e3]"
                    : "border-t-white border-r-[#404040] border-b-2 border-b-[#606060] border-l-white"
                } ${t.cls ?? "text-[13px] font-bold"}`}
              >
                {t.icon ?? t.label}
              </button>
            );
          })}
        </div>
      ))}
      <span className="ml-[2px] h-[31px] w-[2px] border-r border-l border-r-white border-l-[#808080]" />
    </div>
  );
}

const workspaces: [string, string][] = [
  ["BTC_Daily", "w-[63px]"],
  ["BTC_BigVol", "w-[71px]"],
  ["BTC_TimeCharts", "w-[101px]"],
  ["BTC_TimeChartsP", "w-[103px]"],
  ["BTC_VolCharts", "w-[89px]"],
  ["BTC_VolCharts1P", "w-[101px]"],
  ["LTC", "w-[54px]"],
];

const chartTabs: [string, string][] = [
  ["BTCUSD-BTCE  30 Min   #4", "w-[146px]"],
  ["LTCUSD-BTCE  240 Min   #2", "w-[152px]"],
  ["BTCCNY-BTCChina  15 Min   #3", "w-[174px]"],
  ["BTCCYN-OKCOIN  15 Min   #5", "w-[164px]"],
  ["BTC-BSTMP  60 Min   #6", "w-[134px]"],
  ["BTCUSD-BITFINEX  60 Min   #1", "w-[170px]"],
];

function FrameButton({ label, children }: { label: string; children: ReactNode }) {
  return (
    <button aria-label={label} className="flex h-4 w-4 items-center justify-center rounded-[4px] border border-[#a9a59f] bg-[#f8f7f6]">
      <svg width="10" height="10" fill="none" stroke="#a09c96" strokeWidth="2">{children}</svg>
    </button>
  );
}

export default function App() {
  return (
    <div className={`flex min-h-screen flex-col bg-[#d4d0c8] text-[#1a1a1a] ${UI}`}>
      <header className="flex h-[21px] items-start justify-between bg-[#edeceb]">
        <div className="flex gap-px pt-1">
          <FrameButton label="Window menu"><path d="M2 3.500L5 7l3-3.500" strokeWidth="3" /></FrameButton>
          <FrameButton label="Stick"><circle cx="5" cy="5" r="3" /></FrameButton>
        </div>
        <h1 className="pl-2 text-[14px] leading-[25px] font-bold whitespace-pre text-[#a8a49e]">
          Sierra Chart 1143 BTC_TimeCharts.cht  Bitcoin Data (All Services) 2014-06-04  12:55:23 Wed [Sim]  Con:27730
        </h1>
        <div className="flex gap-px pt-1">
          <FrameButton label="Shade"><path d="M5 9V2M2 5l3-3 3 3" /></FrameButton>
          <FrameButton label="Minimize"><path d="M3 8h5" /></FrameButton>
          <FrameButton label="Restore"><path d="M1 4h5v5H1zM4 1h5v5" /></FrameButton>
          <FrameButton label="Close"><path d="M2 2l6 6M8 2L2 8" /></FrameButton>
        </div>
      </header>

      <nav className="flex h-[21px] items-center gap-[11px] border-b border-[#808080] pt-1 pl-[6px] text-[12px]">
        {menus.map(([a, key, b]) => (
          <button key={a + key + b}>
            {a}
            <span className="underline underline-offset-2">{key}</span>
            {b}
          </button>
        ))}
      </nav>
      <div className="h-px bg-white" />
      <Toolbar />

      <div className="flex h-5 items-end border-b border-white pl-[3px]" role="tablist" aria-label="Workspaces">
        {workspaces.map(([name, w]) => {
          const active = name === "BTC_TimeCharts";
          return (
            <button
              key={name}
              role="tab"
              aria-selected={active}
              className={`text-center text-[12px] ${w} ${
                active
                  ? "h-[19px] bg-[#0a246a] pb-[2px] leading-4 text-white"
                  : "h-[17px] rounded-t-xs border-t border-r border-l border-t-white border-r-[#404040] border-l-white leading-4"
              }`}
            >
              {name}
            </button>
          );
        })}
      </div>
      <div className="h-[6px] border-b border-[#808080]" />

      <main className="relative min-h-[948px] flex-1 overflow-hidden border-t border-r-2 border-l border-t-[#404040] border-r-[#e4e1dc] border-l-[#404040] bg-[#808080]">
        <div className="absolute top-0 left-[940px] h-[924px] w-[962px] border-r-2 border-b-2 border-[#404040] bg-[#c8c4bc]" />
        <BstmpChart />
        <BitfinexChart />
      </main>

      <div className="h-[7px] border-b-2 border-[#606060]" />
      <div className="flex h-[21px] items-start pl-[3px]" role="tablist" aria-label="Charts">
        {chartTabs.map(([name, w]) => {
          const active = name.includes("BITFINEX");
          return (
            <button
              key={name}
              role="tab"
              aria-selected={active}
              className={`h-[19px] text-left text-[11px] whitespace-pre ${w} ${
                active
                  ? "bg-[#0a246a] pl-[7px] leading-4 text-white"
                  : "border-r-2 border-b-2 border-l border-r-[#505050] border-b-[#505050] border-l-white pt-[5px] pl-1 leading-3"
              }`}
            >
              {name}
            </button>
          );
        })}
      </div>
    </div>
  );
}
